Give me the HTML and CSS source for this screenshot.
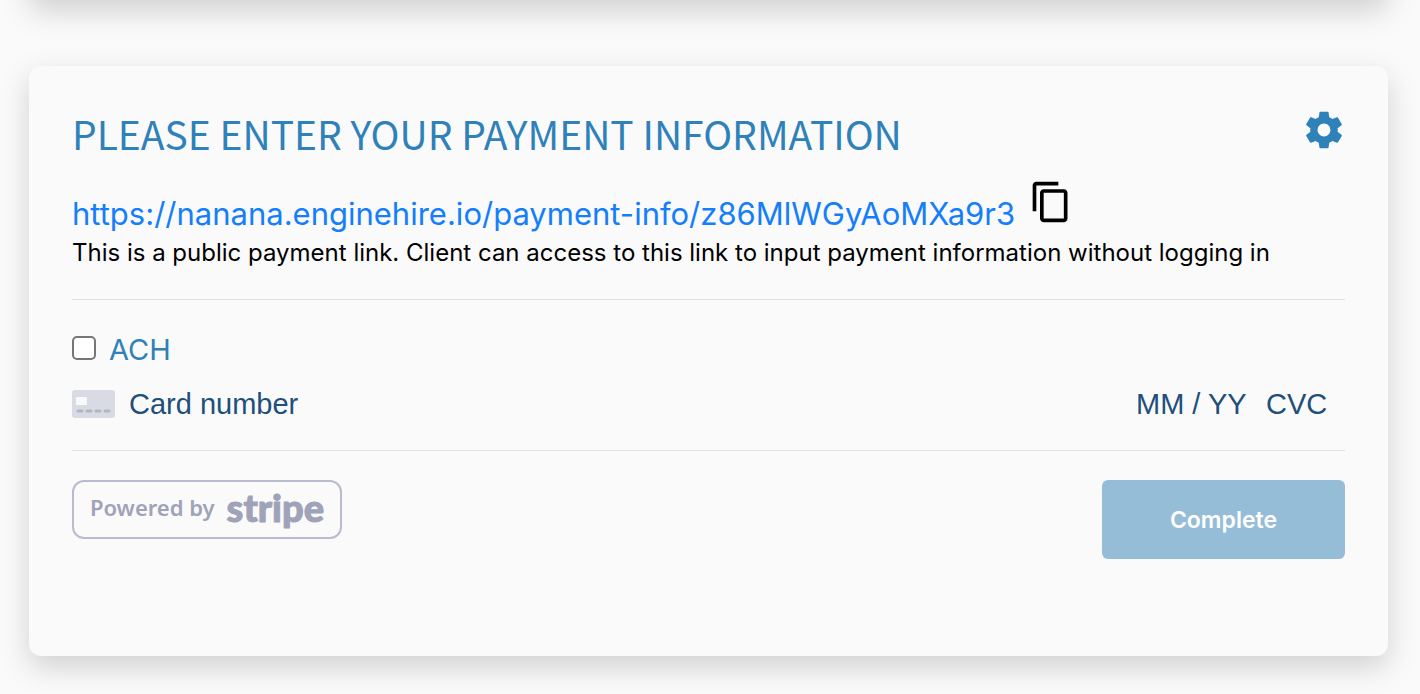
FILE: index.html
```html
<!DOCTYPE html>
<html lang="en">
<head>
<meta charset="utf-8">
<meta name="viewport" content="width=device-width, initial-scale=1">
<title>Payment information</title>
<link rel="stylesheet" href="styles.css">
</head>
<body>
<main class="page">
  <div class="card card-previous"></div>
  <form class="card payment">
    <header class="payment-header">
      <h1 class="title">PLEASE ENTER YOUR PAYMENT INFORMATION</h1>
      <button type="button" class="icon-button" aria-label="Settings">
        <svg class="icon" viewBox="0 0 24 24" aria-hidden="true"><path fill="currentColor" d="M19.43 12.98c.04-.32.07-.64.07-.98s-.03-.66-.07-.98l2.11-1.65c.19-.15.24-.42.12-.64l-2-3.46c-.12-.22-.39-.3-.61-.22l-2.49 1c-.52-.4-1.08-.73-1.69-.98l-.38-2.65C14.46 2.18 14.25 2 14 2h-4c-.25 0-.46.18-.49.42l-.38 2.65c-.61.25-1.17.59-1.69.98l-2.49-1c-.23-.09-.49 0-.61.22l-2 3.46c-.13.22-.07.49.12.64l2.11 1.65c-.04.32-.07.65-.07.98s.03.66.07.98l-2.11 1.65c-.19.15-.24.42-.12.64l2 3.46c.12.22.39.3.61.22l2.49-1c.52.4 1.08.73 1.69.98l.38 2.65c.03.24.24.42.49.42h4c.25 0 .46-.18.49-.42l.38-2.65c.61-.25 1.17-.59 1.69-.98l2.49 1c.23.09.49 0 .61-.22l2-3.46c.12-.22.07-.49-.12-.64l-2.11-1.65zM12 15.5c-1.93 0-3.5-1.57-3.5-3.5s1.57-3.5 3.5-3.5 3.5 1.57 3.5 3.5-1.57 3.5-3.5 3.5z"/></svg>
      </button>
    </header>
    <div class="link-row">
      <a class="public-link" href="https://nanana.enginehire.io/payment-info/z86MlWGyAoMXa9r3">https://nanana.enginehire.io/payment-info/z86MlWGyAoMXa9r3</a>
      <button type="button" class="icon-button copy" aria-label="Copy link">
        <svg class="icon" viewBox="0 0 24 24" aria-hidden="true"><path fill="currentColor" d="M16 1H4c-1.1 0-2 .9-2 2v14h2V3h12V1zm3 4H8c-1.1 0-2 .9-2 2v14c0 1.1.9 2 2 2h11c1.1 0 2-.9 2-2V7c0-1.1-.9-2-2-2zm0 16H8V7h11v14z"/></svg>
      </button>
    </div>
    <p class="note">This is a public payment link. Client can access to this link to input payment information without logging in</p>
    <div class="fields">
      <label class="ach"><input type="checkbox" class="checkbox">ACH</label>
      <div class="card-fields">
        <svg class="card-icon" viewBox="0 0 43 28" aria-hidden="true">
          <rect width="43" height="28" rx="3" fill="#d8dbe3"/>
          <rect x="4" y="7" width="11" height="8" rx="1" fill="#fafafa"/>
          <path d="M6 21h4M15 21h4M24 21h4M33 21h4" stroke="#b1b6c5" stroke-width="3" stroke-linecap="round"/>
        </svg>
        <input class="field number" type="text" placeholder="Card number" aria-label="Card number">
        <input class="field expiry" type="text" placeholder="MM / YY" aria-label="Expiry date">
        <input class="field cvc" type="text" placeholder="CVC" aria-label="CVC">
      </div>
    </div>
    <footer class="actions">
      <div class="stripe-badge"><span>Powered by</span><span class="stripe-name">stripe</span></div>
      <button type="submit" class="submit">Complete</button>
    </footer>
  </form>
</main>
</body>
</html>
```
FILE: styles.css
```css
* { box-sizing: border-box; }
body {
  margin: 0;
  background: #fafafa;
  color: #000;
  font-family: Inter, "Liberation Sans", sans-serif;
}
.page { padding: 0 32px 38px 29px; overflow: hidden; }
.card {
  background: #fafafa;
  border-radius: 12px;
  box-shadow: 0 11px 30px rgba(0, 0, 0, .17);
}
.card-previous { height: 80px; margin-top: -80px; margin-bottom: 66px; }
.payment { padding: 42px 43px 97px; }
.payment-header { display: flex; justify-content: space-between; align-items: flex-start; margin-right: -1px; }
.title {
  margin: 0;
  font: 400 39px/50px "Noto Sans CJK SC", sans-serif;
  color: #2f81b9;
}
.icon-button { flex: none; width: 44px; height: 44px; padding: 0; border: 0; background: none; color: #2f81b9; }
.icon-button.copy { color: #000; }
.icon { display: block; width: 100%; height: 100%; }
.link-row { display: flex; align-items: flex-start; gap: 14px; margin-top: 22px; }
.public-link { font-size: 31px; line-height: 36px; padding-top: 16px; color: #147efb; text-decoration: none; }
.note { margin: 5px 0 0; font-size: 24px; line-height: 32px; white-space: nowrap; }
.fields { margin-top: 30px; padding: 32px 0 28px; border: solid #e0e0e0; border-width: 1px 0; }
.ach { display: flex; align-items: center; gap: 13px; width: max-content; font-size: 29px; line-height: 36px; color: #2f81b9; }
.checkbox {
  appearance: none;
  width: 24px;
  height: 24px;
  margin: 0 0 4px;
  border: 2px solid #767676;
  border-radius: 5px;
  background: #fff;
}
.checkbox:checked { background: #2f81b9; }
.card-fields { display: flex; align-items: center; margin-top: 18px; }
.card-icon { flex: none; width: 43px; height: 28px; margin-right: 14px; }
.field {
  min-width: 0;
  height: 36px;
  padding: 0;
  border: 0;
  background: none;
  font: 29px/36px "Liberation Sans", Arial, sans-serif;
  color: #214f7b;
}
.field::placeholder { color: #214f7b; opacity: 1; }
.number { flex: 1; }
.expiry { width: 130px; }
.cvc { width: 79px; }
.actions { display: flex; justify-content: space-between; align-items: flex-start; margin-top: 29px; }
.stripe-badge {
  display: flex;
  align-items: center;
  justify-content: center;
  gap: 12px;
  width: 270px;
  height: 59px;
  padding-bottom: 6px;
  border: 2px solid #b9bccf;
  border-radius: 12px;
  font: 600 22px/32px "Noto Sans", sans-serif;
  color: #9fa3b9;
}
.stripe-name { font: 900 38px/48px Lato, sans-serif; -webkit-text-stroke: 1px #9fa3b9; }
.submit {
  width: 243px;
  height: 79px;
  border: 0;
  border-radius: 6px;
  background: #96bdd8;
  color: #fff;
  font: 600 23px/32px Inter, sans-serif;
}
```
